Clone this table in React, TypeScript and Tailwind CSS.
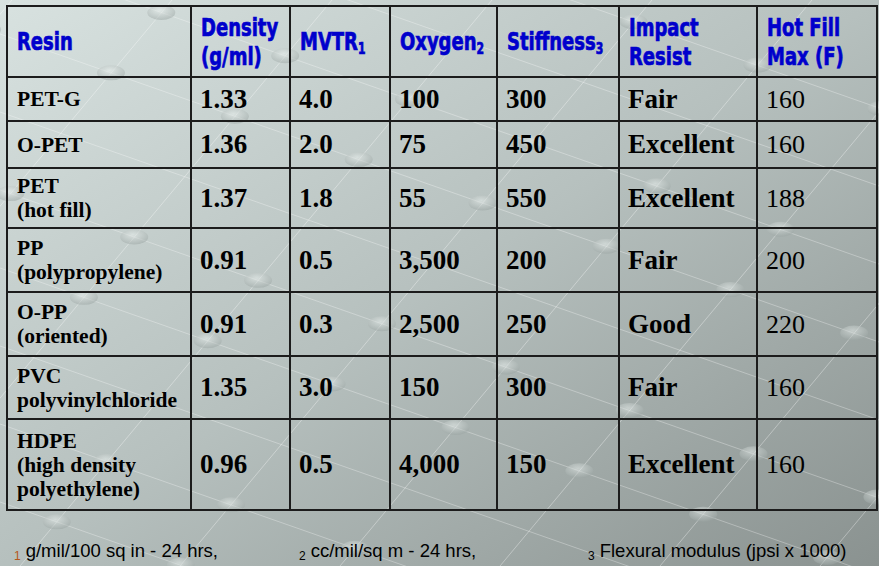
import React from 'react';

type Row = {
  resin: string[];
  density: string;
  mvtr: string;
  oxygen: string;
  stiffness: string;
  impact: string;
  hotFill: string;
  h: string;
};

const rows: Row[] = [
  { resin: ['PET-G'], density: '1.33', mvtr: '4.0', oxygen: '100', stiffness: '300', impact: 'Fair', hotFill: '160', h: 'h-[44px]' },
  { resin: ['O-PET'], density: '1.36', mvtr: '2.0', oxygen: '75', stiffness: '450', impact: 'Excellent', hotFill: '160', h: 'h-[47px]' },
  { resin: ['PET', '(hot fill)'], density: '1.37', mvtr: '1.8', oxygen: '55', stiffness: '550', impact: 'Excellent', hotFill: '188', h: 'h-[60px]' },
  { resin: ['PP', '(polypropylene)'], density: '0.91', mvtr: '0.5', oxygen: '3,500', stiffness: '200', impact: 'Fair', hotFill: '200', h: 'h-[64px]' },
  { resin: ['O-PP', '(oriented)'], density: '0.91', mvtr: '0.3', oxygen: '2,500', stiffness: '250', impact: 'Good', hotFill: '220', h: 'h-[64px]' },
  { resin: ['PVC', 'polyvinylchloride'], density: '1.35', mvtr: '3.0', oxygen: '150', stiffness: '300', impact: 'Fair', hotFill: '160', h: 'h-[63px]' },
  { resin: ['HDPE', '(high density', 'polyethylene)'], density: '0.96', mvtr: '0.5', oxygen: '4,000', stiffness: '150', impact: 'Excellent', hotFill: '160', h: 'h-[91px]' },
];

// faint "molecule" backdrop: diagonal strands with beads at crossings
const steep = Array.from({ length: 10 }, (_, i) => -460 + i * 160);
const shallow = Array.from({ length: 10 }, (_, j) => -200 + j * 78);

const Backdrop: React.FC = () => {
  const beads: { x: number; y: number }[] = [];
  steep.forEach((xi, i) => {
    shallow.forEach((y0, j) => {
      if ((i * 3 + j) % 3 === 1) return;
      const x = (1.2 * xi + 566 - y0) / 1.55;
      const y = y0 + 0.35 * x;
      if (x > -20 && x < 900 && y > -20 && y < 590) beads.push({ x, y });
    });
  });
  return (
    <svg className="absolute inset-0" width="879" height="566" viewBox="0 0 879 566">
      <defs>
        <radialGradient id="bead" cx="45%" cy="35%" r="65%">
          <stop offset="0%" stopColor="#eef4f2" />
          <stop offset="100%" stopColor="#9aa4a2" />
        </radialGradient>
      </defs>
      {steep.map((x) => (
        <line key={'s' + x} x1={x} y1={566} x2={x + 472} y2={0} stroke="#ffffff" strokeOpacity="0.35" strokeWidth="1" />
      ))}
      {shallow.map((y) => (
        <line key={'h' + y} x1={0} y1={y} x2={879} y2={y + 308} stroke="#ffffff" strokeOpacity="0.3" strokeWidth="1" />
      ))}
      {beads.map((b, k) => (
        <ellipse key={k} cx={b.x} cy={b.y} rx="14" ry="7.5" fill="url(#bead)" opacity="0.5" />
      ))}
    </svg>
  );
};

const Head: React.FC<{ lines: string[]; sub?: string }> = ({ lines, sub }) => (
  <th className="border-2 border-[#1c1c1c] pl-[9px] text-left align-middle font-bold font-['DejaVu_Sans_Condensed','DejaVu_Sans',sans-serif] text-[25px] leading-[29px] text-[#0000cc] [-webkit-text-stroke:0.7px_#0000cc]">
    {lines.map((l, i) => (
      <div key={i} className="origin-left scale-x-[0.8] whitespace-nowrap">
        {l}
        {sub && i === lines.length - 1 && <sub className="text-[15px] leading-none">{sub}</sub>}
      </div>
    ))}
  </th>
);

const cell = 'border-2 border-[#1c1c1c] pl-[8px] align-middle';

export default function App() {
  return (
    <div className="relative w-[879px] h-[566px] overflow-hidden bg-linear-to-br from-[#d8e2e0] via-[#b6c0be] to-[#8a9290]">
      <Backdrop />
      <div className="relative pt-[5px] pl-[6px]">
        <table className="table-fixed border-collapse w-[870px] border-2 border-[#1c1c1c]">
          <colgroup>
            <col className="w-[184px]" />
            <col className="w-[99px]" />
            <col className="w-[100px]" />
            <col className="w-[107px]" />
            <col className="w-[122px]" />
            <col className="w-[138px]" />
            <col className="w-[120px]" />
          </colgroup>
          <thead>
            <tr className="h-[71px]">
              <Head lines={['Resin']} />
              <Head lines={['Density', '(g/ml)']} />
              <Head lines={['MVTR']} sub="1" />
              <Head lines={['Oxygen']} sub="2" />
              <Head lines={['Stiffness']} sub="3" />
              <Head lines={['Impact', 'Resist']} />
              <Head lines={['Hot Fill', 'Max (F)']} />
            </tr>
          </thead>
          <tbody className="font-['Liberation_Serif',serif] text-black">
            {rows.map((r) => (
              <tr key={r.resin[0]} className={r.h}>
                <td className={`${cell} pl-[9px] font-bold text-[21.5px] leading-[24px]`}>
                  {r.resin.map((l) => (
                    <div key={l}>{l}</div>
                  ))}
                </td>
                <td className={`${cell} font-bold text-[27px]`}>{r.density}</td>
                <td className={`${cell} font-bold text-[27px]`}>{r.mvtr}</td>
                <td className={`${cell} font-bold text-[27px]`}>{r.oxygen}</td>
                <td className={`${cell} font-bold text-[27px]`}>{r.stiffness}</td>
                <td className={`${cell} font-bold text-[27px]`}>{r.impact}</td>
                <td className={`${cell} text-[26px]`}>{r.hotFill}</td>
              </tr>
            ))}
          </tbody>
        </table>
      </div>
      <div className="relative mt-[26px] flex pl-[14px] font-['Liberation_Sans',Arial,sans-serif] text-[18.5px] text-black">
        <div className="w-[285px]">
          <sub className="text-[12px] text-[#b5561a] mr-[5px]">1</sub>g/mil/100 sq in - 24 hrs,
        </div>
        <div className="w-[289px]">
          <sub className="text-[12px] mr-[5px]">2</sub>cc/mil/sq m - 24 hrs,
        </div>
        <div>
          <sub className="text-[12px] mr-[5px]">3</sub>Flexural modulus (jpsi x 1000)
        </div>
      </div>
    </div>
  );
}
